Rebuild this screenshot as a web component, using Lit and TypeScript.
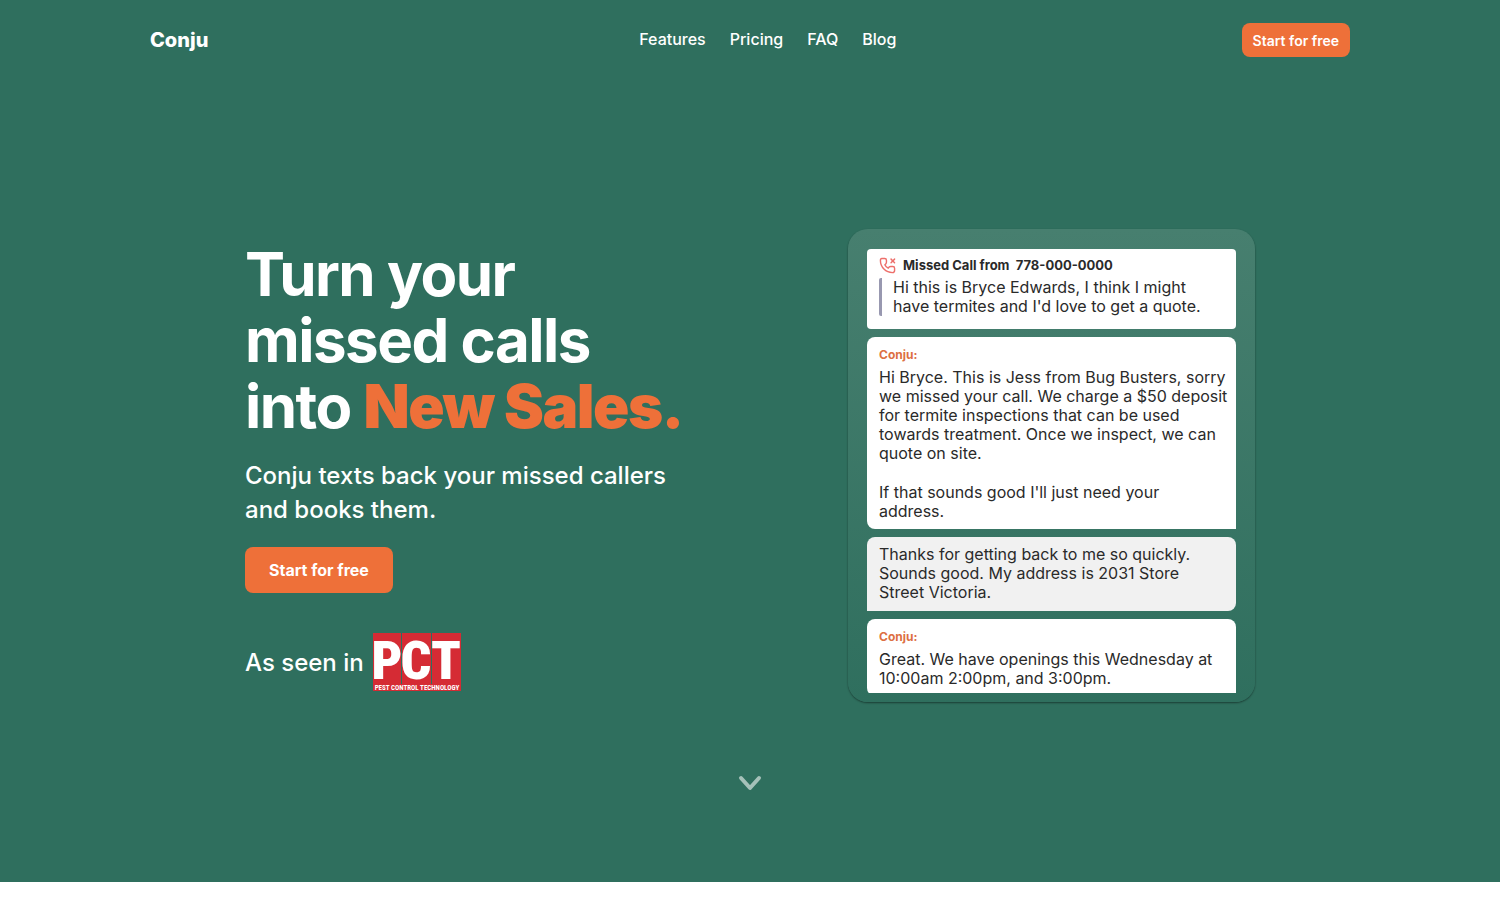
import { LitElement, html, css } from "lit";
import { customElement } from "lit/decorators.js";

@customElement("app-root")
export class AppRoot extends LitElement {
  static styles = css`
    :host {
      display: block;
      min-height: 100vh;
      background: #fff;
      color: #fff;
      font-family: Inter, sans-serif;
      font-size: 16px;
    }
    * { box-sizing: border-box; }
    h1, p, blockquote { margin: 0; }
    a { color: inherit; text-decoration: none; }
    .page {
      display: flex;
      flex-direction: column;
      min-height: 882px;
      background: #2f6f5e;
    }
    .nav {
      width: 100%;
      max-width: 1200px;
      height: 80px;
      margin: 0 auto;
      display: flex;
      align-items: center;
      justify-content: space-between;
    }
    .brand { font-size: 20px; font-weight: 800; width: 108px; }
    .links { display: flex; gap: 24px; font-weight: 500; line-height: 20px; padding: 0 0 2px 36px; }
    button {
      border: 0;
      border-radius: 8px;
      background: #ee7039;
      color: #fff;
      font-family: inherit;
      cursor: pointer;
      white-space: nowrap;
    }
    .small { height: 34px; padding: 0 11px; font-size: 14px; font-weight: 600; }
    .large { height: 46px; padding: 0 24px; font-size: 16px; font-weight: 700; margin-top: 20px; }
    .hero {
      width: 100%;
      max-width: 1010px;
      margin: 149px auto 0;
      display: flex;
      justify-content: space-between;
      align-items: flex-start;
    }
    .copy { padding-top: 12px; }
    h1 { font-size: 60px; line-height: 66px; font-weight: 700; letter-spacing: -0.025em; }
    .accent { color: #ee7039; font-weight: 900; }
    .lead { margin-top: 20px; font-size: 24px; line-height: 34px; font-weight: 500; }
    .seen { margin-top: 40px; display: flex; align-items: center; gap: 9px; font-size: 24px; font-weight: 500; }
    .logo { display: block; width: 88px; height: 58px; overflow: visible; }
    .card {
      width: 407px;
      padding: 20px 19px 9px;
      border-radius: 20px;
      background: linear-gradient(#477f6f, #2f6f5e);
      box-shadow: 0 1px 2px rgba(0, 0, 0, 0.45);
    }
    .thread {
      height: 444px;
      overflow: hidden;
      display: flex;
      flex-direction: column;
      gap: 8px;
      color: #2a2a2a;
      line-height: 19px;
    }
    .bubble {
      flex: none;
      background: #fff;
      border-radius: 8px 8px 0 8px;
      padding: 8px 12px;
    }
    .bubble p, blockquote { white-space: nowrap; }
    .missed { border-radius: 4px; padding: 6px 12px 13px; }
    .reply { background: #f1f1f1; border-radius: 8px 8px 8px 0; padding: 8px 12px 9px; }
    .label { font-size: 12px; font-weight: 700; line-height: 20px; margin-bottom: 3px; }
    .from { color: #dd6f42; }
    .call { display: flex; align-items: center; gap: 7px; font-size: 13px; white-space: pre; }
    blockquote { border-left: 3px solid #9898b0; border-radius: 2px; padding-left: 11px; }
    .gap { padding-top: 20px; }
    .down { display: block; width: 28px; margin: 67px auto 0; }
    .down svg { display: block; }
  `;

  render() {
    return html`
      <div class="page">
        <header class="nav">
          <a class="brand" href="#">Conju</a>
          <nav class="links">
            <a href="#features">Features</a><a href="#pricing">Pricing</a><a href="#faq">FAQ</a><a href="#blog">Blog</a>
          </nav>
          <button class="small">Start for free</button>
        </header>
        <main>
          <section class="hero">
            <div class="copy">
              <h1>Turn your<br />missed calls<br />into <span class="accent">New Sales.</span></h1>
              <p class="lead">Conju texts back your missed callers<br />and books them.</p>
              <button class="large">Start for free</button>
              <div class="seen">
                <span>As seen in</span>
                <svg class="logo" viewBox="0 0 88 58" role="img" aria-label="PCT Pest Control Technology">
                  <path fill="#d52b34" d="M0 0h28v51H0zM29 0h29v51H29zM59 0h29v51H59zM0 51h88v7H0z" />
                  <g fill="#fff" font-family="Roboto Condensed, Noto Sans, sans-serif" font-weight="900" text-anchor="middle">
                    <text x="14" y="46" font-size="54">P</text>
                    <text x="43" y="46" font-size="54">C</text>
                    <text x="73" y="46" font-size="54">T</text>
                    <text x="44" y="57" font-size="7" font-weight="700">PEST CONTROL TECHNOLOGY</text>
                  </g>
                </svg>
              </div>
            </div>
            <div class="card">
              <div class="thread">
                <article class="bubble missed">
                  <div class="label call"><svg width="17" height="17" viewBox="0 0 24 24" fill="none" stroke="#ed6f6b" stroke-width="2" stroke-linecap="round" stroke-linejoin="round"><path d="M17 3l5 5M22 3l-5 5M4 2h4c1.500 0 2.500 1 2.500 2.500v3c0 1.500-.5 2.500-2.300 3.500 1.100 2.300 2.500 3.700 4.800 4.800 1-1.800 2-2.300 3.500-2.300h3c1.500 0 2.500 1 2.500 2.500v3c0 2-1.300 3-3 3C9.600 22 2 14.400 2 5c0-2 1-3 2-3z" /></svg><span>Missed Call from  778-000-0000</span></div>
                  <blockquote>Hi this is Bryce Edwards, I think I might<br />have termites and I'd love to get a quote.</blockquote>
                </article>
                <article class="bubble">
                  <div class="label from">Conju:</div>
                  <p>Hi Bryce. This is Jess from Bug Busters, sorry<br />we missed your call. We charge a $50 deposit<br />for termite inspections that can be used<br />towards treatment. Once we inspect, we can<br />quote on site.</p>
                  <p class="gap">If that sounds good I'll just need your<br />address.</p>
                </article>
                <article class="bubble reply">
                  <p>Thanks for getting back to me so quickly.<br />Sounds good. My address is 2031 Store<br />Street Victoria.</p>
                </article>
                <article class="bubble">
                  <div class="label from">Conju:</div>
                  <p>Great. We have openings this Wednesday at<br />10:00am 2:00pm, and 3:00pm.</p>
                </article>
              </div>
            </div>
          </section>
          <a class="down" href="#features" aria-label="Scroll down">
            <svg width="28" height="28" viewBox="0 0 28 28" fill="none" stroke="#a5c1b9" stroke-width="4" stroke-linecap="round" stroke-linejoin="round"><path d="M5 9l9 10 9-10" /></svg>
          </a>
        </main>
      </div>
    `;
  }
}
